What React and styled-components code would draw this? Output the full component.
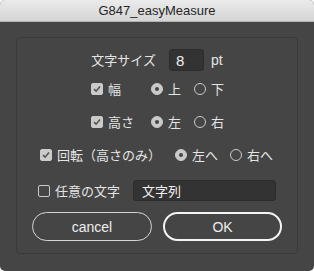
import styled, { createGlobalStyle } from "styled-components";

const Global = createGlobalStyle`
  html, body { margin: 0; padding: 0; background: #fff; }
  body { font-family: "Liberation Sans", "Noto Sans CJK JP", sans-serif; }
`;

const Window = styled.div`
  width: 314px;
  height: 271px;
  border-radius: 5px;
  overflow: hidden;
  display: flex;
  flex-direction: column;
  background: #454545;
`;

const TitleBar = styled.div`
  height: 22px;
  flex: none;
  box-sizing: border-box;
  background: linear-gradient(#ebebeb, #d5d5d5);
  border-bottom: 1px solid #b4b4b4;
  display: flex;
  align-items: center;
  justify-content: center;
  font-size: 13px;
  color: #262626;
  font-family: "Liberation Sans", sans-serif;
`;

const Body = styled.div`
  flex: 1;
  padding: 15px 16px 17px;
  display: flex;
`;

const Panel = styled.div`
  flex: 1;
  border: 1px solid #3a3a3a;
  border-radius: 4px;
  display: flex;
  flex-direction: column;
  align-items: center;
  padding-top: 11px;
  box-sizing: border-box;
  color: #e4e4e4;
  font-family: "Noto Sans CJK JP", "Liberation Sans", sans-serif;
  font-size: 13px;
`;

const Row = styled.div`
  display: flex;
  align-items: center;
  gap: ${(p) => p.gap || 0}px;
  height: ${(p) => p.h || 16}px;
  margin-top: ${(p) => p.mt || 0}px;
  width: ${(p) => (p.w ? p.w + "px" : "auto")};
`;

const Label = styled.span`
  line-height: 16px;
  white-space: nowrap;
  margin-right: ${(p) => p.mr || 0}px;
  margin-left: ${(p) => p.ml || 0}px;
  font-family: ${(p) => (p.latin ? '"Liberation Sans", sans-serif' : "inherit")};
  font-size: ${(p) => (p.latin ? 14 : 13)}px;
`;

const Input = styled.div`
  box-sizing: border-box;
  width: ${(p) => p.w}px;
  height: ${(p) => p.h}px;
  background: #333;
  border: 1px solid #2c2c2c;
  border-radius: 3px;
  display: flex;
  align-items: center;
  padding-left: ${(p) => p.pl || 6}px;
  color: #f0f0f0;
  font-family: ${(p) => (p.latin ? '"Liberation Sans", sans-serif' : "inherit")};
  font-size: ${(p) => (p.latin ? 15 : 13)}px;
`;

const Item = styled.div`
  display: flex;
  align-items: center;
  width: ${(p) => (p.w ? p.w + "px" : "auto")};
  flex: none;
`;

const Box = styled.span`
  width: 12px;
  height: 12px;
  box-sizing: border-box;
  border-radius: 2px;
  flex: none;
  margin-right: 5px;
  background: ${(p) => (p.on ? "#cacaca" : "transparent")};
  border: 1px solid #cacaca;
  display: flex;
  align-items: center;
  justify-content: center;
`;

const Radio = styled.span`
  width: 12px;
  height: 12px;
  box-sizing: border-box;
  border-radius: 50%;
  flex: none;
  margin-right: 5px;
  background: ${(p) => (p.on ? "#cacaca" : "transparent")};
  border: 1px solid #cacaca;
  display: flex;
  align-items: center;
  justify-content: center;
  &::after {
    content: "";
    display: ${(p) => (p.on ? "block" : "none")};
    width: 4px;
    height: 4px;
    border-radius: 50%;
    background: #454545;
  }
`;

const Button = styled.div`
  box-sizing: border-box;
  width: ${(p) => p.w}px;
  height: 29px;
  border-radius: 15px;
  border: ${(p) => (p.primary ? "2px solid #f4f4f4" : "1.5px solid #d6d6d6")};
  display: flex;
  align-items: center;
  justify-content: center;
  color: #eee;
  font-family: "Liberation Sans", sans-serif;
  font-size: 14px;
`;

function Check({ on }) {
  return (
    <Box on={on}>
      {on && (
        <svg width="8" height="8" viewBox="0 0 8 8">
          <path d="M1 4.2 L3.1 6.2 L7 1.6" fill="none" stroke="#555" strokeWidth="1.6" />
        </svg>
      )}
    </Box>
  );
}

export default function App() {
  return (
    <>
      <Global />
      <Window>
        <TitleBar>G847_easyMeasure</TitleBar>
        <Body>
          <Panel>
            <Row h={22}>
              <Label mr={13}>文字サイズ</Label>
              <Input w={35} h={22} latin>8</Input>
              <Label latin ml={7}>pt</Label>
            </Row>
            <Row mt={10} w={132}>
              <Item w={60}>
                <Check on />
                <Label>幅</Label>
              </Item>
              <Item w={43}>
                <Radio on />
                <Label>上</Label>
              </Item>
              <Item>
                <Radio />
                <Label>下</Label>
              </Item>
            </Row>
            <Row mt={17} w={132}>
              <Item w={60}>
                <Check on />
                <Label>高さ</Label>
              </Item>
              <Item w={43}>
                <Radio on />
                <Label>左</Label>
              </Item>
              <Item>
                <Radio />
                <Label>右</Label>
              </Item>
            </Row>
            <Row mt={17} w={234}>
              <Item w={135}>
                <Check on />
                <Label>回転（高さのみ）</Label>
              </Item>
              <Item w={55}>
                <Radio on />
                <Label>左へ</Label>
              </Item>
              <Item>
                <Radio />
                <Label>右へ</Label>
              </Item>
            </Row>
            <Row mt={17} h={21} w={238}>
              <Item w={95}>
                <Check />
                <Label>任意の文字</Label>
              </Item>
              <Input w={143} h={21} pl={8}>文字列</Input>
            </Row>
            <Row mt={11} h={29} gap={11}>
              <Button w={120}>cancel</Button>
              <Button w={119} primary>OK</Button>
            </Row>
          </Panel>
        </Body>
      </Window>
    </>
  );
}
